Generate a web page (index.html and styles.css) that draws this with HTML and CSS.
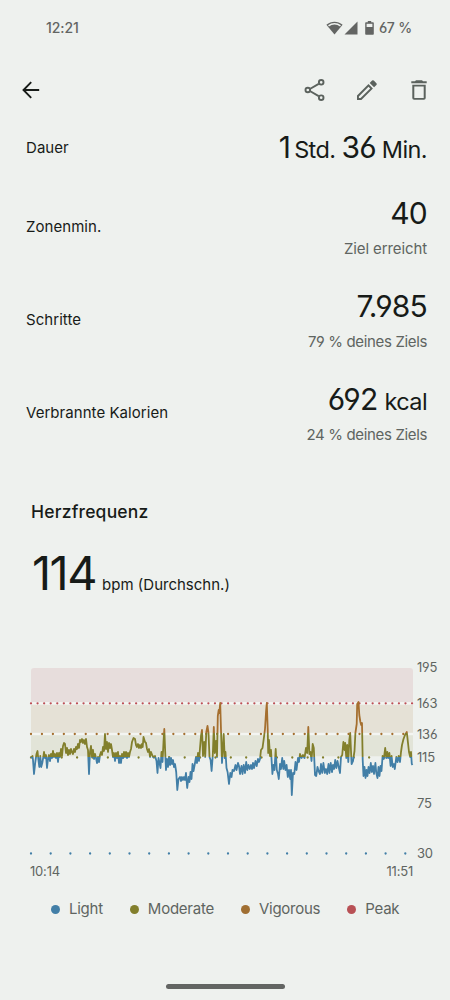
FILE: index.html
```html
<!DOCTYPE html>
<html lang="de">

<head>
    <meta charset="UTF-8">
    <meta name="viewport" content="width=device-width, initial-scale=1.0">
    <title>Trainingsdetails</title>
    <link rel="stylesheet" href="styles.css">
</head>

<body>
    <div class="screen">
        <div class="status-bar">
            <span class="clock">12:21</span>
            <div class="status-icons">
                <svg class="wifi" width="17" height="14" viewBox="0 0 17 14">
                    <path d="M8.5 13.6 0.4 3.8C5.2-.3 11.8-.3 16.6 3.8Z" fill="#636563" />
                    <path d="M2.5 4.8C6 2.2 11 2.2 14.5 4.8" fill="none" stroke="#eef1ee" stroke-width="1.5" />
                </svg>
                <svg class="signal" width="14" height="14" viewBox="0 0 14 14">
                    <path d="M13.5.5V13.5H.5Z" fill="#636563" />
                </svg>
                <svg class="battery" width="9" height="14" viewBox="0 0 9 14">
                    <path d="M2.8 0H6.2V1.3H8Q8.8 1.3 8.8 2.1V12.9Q8.8 13.7 8 13.7H1Q.2 13.7.2 12.9V2.1Q.2 1.3 1 1.3H2.8Z" fill="#636563" />
                    <path d="M1.6 2.8H7.4V6H1.6Z" fill="#eef1ee" />
                </svg>
                <span class="charge">67 %</span>
            </div>
        </div>

        <div class="toolbar">
            <svg class="back" width="18" height="18" viewBox="0 0 18 18" fill="none" stroke="#171b18" stroke-width="1.9">
                <path d="M17.2 9H1.8M9.2 1.2 1.5 9 9.2 16.8" />
            </svg>
            <div class="actions">
                <svg width="21" height="22" viewBox="0 0 20 22" fill="none" stroke="#5b625d" stroke-width="1.9">
                    <path d="M5.8 9.8 14.2 4.9M5.8 12.2 14.2 17.1" />
                    <circle cx="3.3" cy="11" r="2.3" />
                    <circle cx="16.7" cy="3.3" r="2.3" />
                    <circle cx="16.7" cy="18.7" r="2.3" />
                </svg>
                <svg class="edit" width="20" height="20" viewBox="0 0 20 20" fill="#5b625d">
                    <path d="M0 15.6V20H4.4L15.9 8.5 11.5 4.1ZM1.9 16.4 11.5 6.8 13.2 8.5 3.6 18.1H1.9Z" fill-rule="evenodd" />
                    <path d="M12.7 2.9 15.1.5Q15.9-.2 16.8.6L19.4 3.2Q20.2 4 19.4 4.9L17.1 7.3Z" />
                </svg>
                <svg width="16" height="20" viewBox="0 0 16 20" fill="#5b625d">
                    <path d="M5 .2H11L12 1.3H15.7V3.3H.3V1.3H4Z" />
                    <path d="M1.3 4.7H14.7V18Q14.7 19.8 12.9 19.8H3.1Q1.3 19.8 1.3 18ZM3.3 6.4V17.9H12.7V6.4Z" fill-rule="evenodd" />
                </svg>
            </div>
        </div>

        <div class="stats">
            <div class="stat stat-short">
                <span class="label">Dauer</span>
                <div class="value"><b>1</b><small class="std">Std.</small><b>36</b><small class="min">Min.</small></div>
            </div>
            <div class="stat">
                <span class="label">Zonenmin.</span>
                <div class="result">
                    <div class="value">40</div>
                    <div class="goal reached">Ziel erreicht</div>
                </div>
            </div>
            <div class="stat">
                <span class="label">Schritte</span>
                <div class="result">
                    <div class="value">7.985</div>
                    <div class="goal">79 % deines Ziels</div>
                </div>
            </div>
            <div class="stat">
                <span class="label">Verbrannte Kalorien</span>
                <div class="result">
                    <div class="value">692<small class="kcal">kcal</small></div>
                    <div class="goal">24 % deines Ziels</div>
                </div>
            </div>
        </div>

        <h2 class="section-title">Herzfrequenz</h2>
        <div class="average">
            <span class="average-value">114</span>
            <span class="average-unit">bpm (Durchschn.)</span>
        </div>

        <svg class="chart" width="450" height="220" viewBox="0 660 450 220">
            <defs>
                <!-- Linienfarbe je nach Zone -->
                <linearGradient id="zones" gradientUnits="userSpaceOnUse" x1="0" y1="668" x2="0" y2="868">
                    <stop offset="0.3275" stop-color="#a56f2f" />
                    <stop offset="0.3275" stop-color="#827f2c" />
                    <stop offset="0.4475" stop-color="#827f2c" />
                    <stop offset="0.4475" stop-color="#427fa7" />
                </linearGradient>
            </defs>
            <path d="M31 702V671Q31 668 34 668H410Q413 668 413 671V702Z" fill="#e7dddc" />
            <path d="M31 704.4H413V732.8H31Z" fill="#e5e1d6" />
            <path d="M31 735.2H413V756.2H31Z" fill="#e2e4d8" />
            <path d="M31 703.3H413M31 734H413" stroke="#f4f5f2" stroke-width="2.2" />
            <g fill="none" stroke-width="2.3" stroke-linecap="round">
                <path d="M31 703.3H413" stroke="#bd4e56" stroke-dasharray="0 6.57" />
                <path d="M31 734H413" stroke="#a56f2f" stroke-dasharray="0 10.95" />
                <path d="M31 757.5H413" stroke="#827f2c" stroke-dasharray="0 15.37" />
                <path d="M31 853.5H413" stroke="#427fa7" stroke-dasharray="0 19.7" />
            </g>
            <polyline fill="none" stroke="url(#zones)" stroke-width="1.8" stroke-linejoin="round" points="
                31,758 32.5,756 33,760 34,774 35.3,762 36.5,754 37.5,751 38.3,759 39.3,767 40.3,756 41.2,767 42.3,763
                43.3,757 44,752 45,758 46,755 47,768 48,759 49,755 50,761 51,754 52,758 53,751 54,757 55,754 56,758
                57,753 58,762 59,753 60,757 61,749 62,756 63,746 64,743 65,744 66,753 67,748 68,755 69,750 70,754
                71,749 72,752 73,754 74,749 75,752 76,747 77,749 78,744 79,748 80,740 81,742 82,739 83,743 84,740
                85,744 86,739 87,747 88,750 89,774 90,752 91,746 92,757 93,750 94,759 95,754 96,758 97,763 98,757
                99,762 100,755 101,752 102,755 103,747 104,751 105,734 106,749 107,742 108,752 109,743 110,748
                111,744 112,750 113,757 114,753 115,761 116,753 117,758 118,752 119,763 120,756 121,763 122,754
                123,758 124,752 125,757 126,752 127,758 128,753 129,757 130,752 131,749 132,742 133.5,738 135,739
                136,745 137,747 138,744 139,748 140,745 141,748 142,744 142.7,747 143.5,737 145,742 146,743 147,749
                148,752 149,749 150,757 151,752 153,757 155,756 156.5,761 157.5,773 158.5,758 159.5,763 160.5,768
                161.5,752 162.5,762 163.5,742 164.3,729 165.2,752 166,770 167,759 168,767 169,757 170,765 171,758
                172,764 173,760 174,767 175,764 176.2,772 177.3,790 178.5,779 180,777 181,781 182,777 183,780
                184,777 185,780 186,773 187.2,788 188.5,777 189.5,782 190.5,772 191.5,779 192.5,764 193.5,771
                195,763 196,757 197,763 198,753 199,761 200,748 201,736 202,730 203,756 204.2,742 205.2,757
                206.3,732 207.5,726 208.5,733 209.5,757 210.6,760 211.6,771 212.8,755 213.8,727 214.8,753
                216,741 217,757 217.8,716 218.7,710 219.3,713 220.2,703 221,730 222,763 223.7,734 224.7,758
                225.5,752 226.5,768 227.6,772 229,784 230.3,773 231.5,777 232.5,770 234,771 235.5,765 236.5,770
                238,763 239,766 240,774 241.5,766 242.5,774 243.7,765 245,773 246.2,762 247.3,770 248.5,765
                249.8,769 251,765 252,769 253,763 254,768 255.5,761 256.7,766 258,759 259,762 260,759 261,750
                262.5,748 264,737 265,729 266.1,711 266.8,703 267.7,729 268.2,753 269,740 270,756 271,750
                272.4,774 273.5,765 274.5,770 275.7,749 276.8,770 278,774 278.8,779 280,764 281,769 282.2,758
                283.3,769 284.2,761 285.4,770 286.6,765 287.8,777 289,770 290.2,779 291,770 291.8,795 293,773
                294.3,774 295.5,762 296.5,770 298,758 299,762 300,754 301.5,758 303,755 304.5,758 306,748
                307.2,753 308.3,727 309.4,754 310.5,752 311.5,761 312.7,744 313.8,748 315,775 316.2,776
                317.5,767 318.6,771 320,774 321,764 322.2,773 323.4,763 324.8,773 326,769 327.2,774 328.5,764
                329.5,773 330.7,763 332,772 333,765 334.1,769 335.2,760 336.3,768 337.5,761 338.7,767 340,773
                341,757 342.2,755 343.4,742 344.5,750 345.2,743 346.3,758 347.2,745 348.3,762 349.3,740
                350.2,733 351,751 351.6,764 353,761 354.5,751 355.4,733 356.7,724 357.2,704 358.5,702 359.3,715
                360.4,722 361.2,725 362,723 362.7,760 363.5,776 364.5,767 365.5,778 366.5,770 367.5,776
                368.5,767 369.6,773 370.8,763 371.8,772 373,766 374,774 375.4,763 376.3,773 377.5,778 378.5,767
                379.5,776 380.5,766 381.5,771 382.6,756 383.8,759 385.2,748 386.3,758 387.3,752 388.2,758
                389.4,753 390.6,766 391.6,756 392.7,767 394,764 394.8,769 396.3,757 397.5,762 398.7,756
                400,762 401,752 402,745 403.5,739 405,735 406.8,732 408,743 409,752 410.2,757 411,752 411.8,764
                412.5,765" />
            <g class="axis">
                <text x="417" y="672">195</text>
                <text x="417" y="708">163</text>
                <text x="417" y="739">136</text>
                <text x="417" y="762">115</text>
                <text x="417" y="808">75</text>
                <text x="417" y="858">30</text>
                <text x="30" y="876">10:14</text>
                <text x="413" y="876" text-anchor="end">11:51</text>
            </g>
        </svg>

        <div class="legend">
            <span class="legend-item light">Light</span>
            <span class="legend-item moderate">Moderate</span>
            <span class="legend-item vigorous">Vigorous</span>
            <span class="legend-item peak">Peak</span>
        </div>

        <div class="home-bar"></div>
    </div>
</body>

</html>
```
FILE: styles.css
```css
:root {
    --bg: #eef1ee;
    --text: #171b18;
    --muted: #5f6561;
}

* {
    box-sizing: border-box;
}

body {
    margin: 0;
    background: var(--bg);
    color: var(--text);
    font-family: Inter, "Liberation Sans", sans-serif;
    font-feature-settings: "cv03", "cv04"; /* offene 6 und 9 */
}

svg {
    display: block;
    flex: none;
}

.screen {
    width: 450px;
    height: 1000px;
    display: flex;
    flex-direction: column;
    overflow: hidden;
}

/* Statusleiste */
.status-bar {
    height: 56px;
    padding: 0 38px 1px 46px;
    display: flex;
    align-items: center;
    justify-content: space-between;
    font-size: 14px;
    font-weight: 500;
    letter-spacing: -0.1px;
    color: #636563;
}

.status-icons {
    display: flex;
    align-items: center;
}

.signal {
    margin-left: 1px;
}

.battery {
    margin: 0 5px 0 7px;
}

/* Werkzeugleiste */
.toolbar {
    height: 68px;
    padding: 0 23px 0 22px;
    display: flex;
    align-items: center;
    justify-content: space-between;
}

.actions {
    display: flex;
    align-items: center;
    gap: 33px;
}

.edit {
    margin: 0 1px 0 -1px;
}

/* Kennzahlen */
.stats {
    padding: 0 23px 0 26px;
}

.stat {
    height: 93px;
    display: flex;
    align-items: center;
    justify-content: space-between;
}

.stat-short {
    height: 56px;
    padding-bottom: 10px;
}

.label {
    font-size: 15px;
    letter-spacing: 0.05px;
}

.result {
    text-align: right;
    padding-top: 3px;
}

.value {
    font-size: 30px;
    line-height: 36px;
    letter-spacing: -0.8px;
    white-space: nowrap;
}

.value b {
    font-weight: 400;
}

.value small {
    font-size: 23.5px;
    line-height: 1;
    letter-spacing: -0.6px;
}

.std {
    margin: 0 6px 0 4px;
}

.min {
    margin-left: 6px;
}

.kcal {
    margin-left: 7px;
}

.goal {
    margin-top: 6px;
    font-size: 15px;
    line-height: 24px;
    letter-spacing: -0.35px;
    color: var(--muted);
}

.reached {
    letter-spacing: -0.1px;
}

/* Herzfrequenz */
.section-title {
    margin: 41px 0 0 31px;
    font-size: 17.5px;
    line-height: 24px;
    font-weight: 500;
    letter-spacing: 0.2px;
}

.average {
    height: 60px;
    margin: 19px 0 57px 32px;
    display: flex;
    align-items: baseline;
    gap: 6px;
}

.average-value {
    font-size: 47px;
    line-height: 60px;
    letter-spacing: -1.5px;
}

.average-unit {
    font-size: 15px;
}

.axis {
    font-size: 13px;
    letter-spacing: -0.2px;
    fill: var(--muted);
}

.legend {
    margin-top: 16px;
    padding-left: 51px;
    display: flex;
    gap: 27px;
    font-size: 15px;
    line-height: 26px;
    letter-spacing: -0.25px;
    color: var(--muted);
}

.legend-item {
    display: flex;
    align-items: center;
    gap: 9px;
}

.legend-item::before {
    content: '';
    width: 9px;
    height: 9px;
    border-radius: 50%;
    background: currentColor;
}

.light::before {
    background: #427fa7;
}

.moderate::before {
    background: #827f2c;
}

.vigorous::before {
    background: #a06f32;
}

.peak::before {
    background: #b85155;
}

.home-bar {
    width: 119px;
    height: 5px;
    margin: auto auto 11px;
    border-radius: 3px;
    background: #636563;
}
```
